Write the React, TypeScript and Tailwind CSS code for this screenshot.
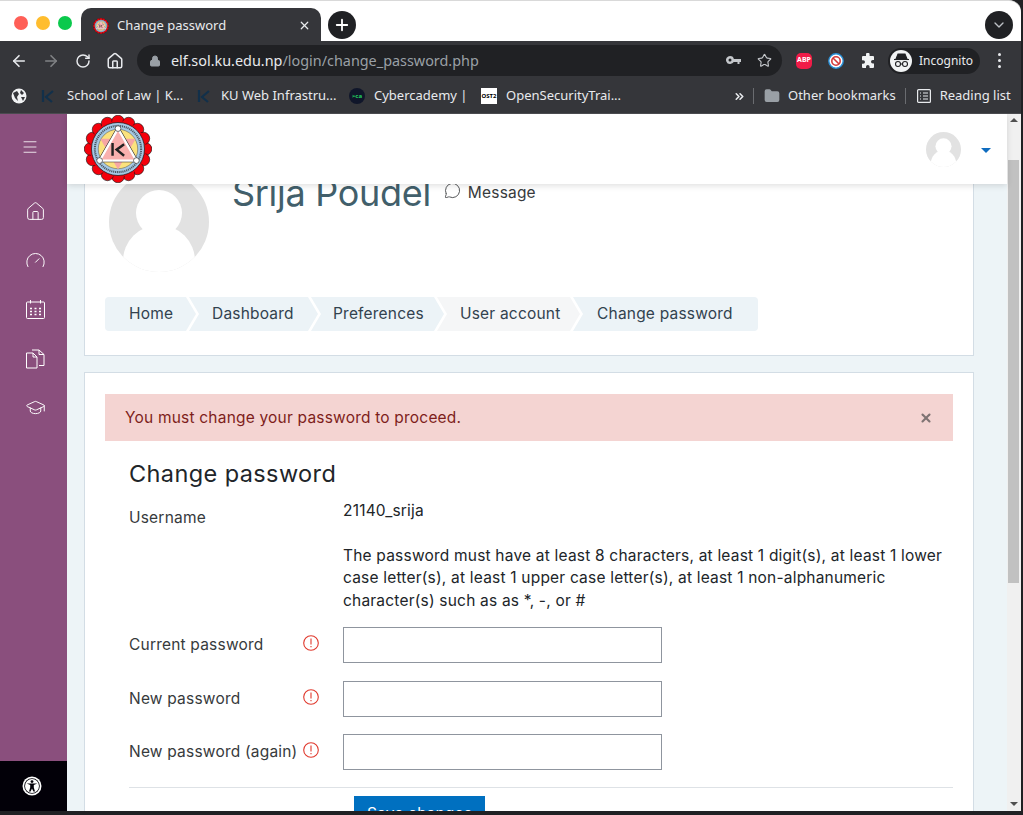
import {
  ArrowLeft,
  ArrowRight,
  ChevronDown,
  ChevronsRight,
  Folder,
  Gauge,
  GraduationCap,
  Home,
  Lock,
  Menu,
  MessageCircle,
  Plus,
  RotateCw,
  Star,
  X,
} from "lucide-react";

const poppins = "font-['Inter',sans-serif] text-[15.5px] tracking-[0.2px]";

function KuLogo({ size, id }: { size: number; id: string }) {
  const lobes = Array.from({ length: 16 }, (_, i) => {
    const a = (i / 16) * Math.PI * 2;
    return { key: `${id}-${i}`, x: 50 + 40.5 * Math.cos(a), y: 50 + 40.5 * Math.sin(a) };
  });
  return (
    <svg width={size} height={size} viewBox="0 0 100 100">
      {lobes.map((l) => (
        <circle key={l.key} cx={l.x} cy={l.y} r="9.2" fill="#f4000b" stroke="#111" strokeWidth="0.9" />
      ))}
      <circle cx="50" cy="50" r="41" fill="#f4000b" />
      <circle cx="50" cy="50" r="39" fill="#a5c8e4" stroke="#111" strokeWidth="1" />
      <circle cx="50" cy="50" r="34" fill="none" stroke="#4a5560" strokeWidth="3" strokeDasharray="1.6 1.2" />
      <circle cx="50" cy="50" r="29" fill="#fbe27d" stroke="#333" strokeWidth="0.6" />
      <path d="M24 35 H76 L50 80 Z" fill="#f6a6a4" />
      <path d="M50 20 L77 67 H23 Z" fill="#f9b0ae" stroke="#222" strokeWidth="5" strokeLinejoin="round" />
      <path d="M50 20 L77 67 H23 Z" fill="#f9b0ae" stroke="#fff" strokeWidth="3.4" strokeLinejoin="round" />
      <circle cx="50" cy="20" r="4.2" fill="#fff" stroke="#333" />
      <circle cx="77" cy="67" r="4.2" fill="#fff" stroke="#333" />
      <circle cx="23" cy="67" r="4.2" fill="#fff" stroke="#333" />
      <path d="M42 41 V60 M59 43 L48 51 L59 60" fill="none" stroke="#222" strokeWidth="3.6" />
    </svg>
  );
}

function KMark() {
  return (
    <svg width="16" height="16" viewBox="0 0 16 16">
      <path d="M3 2 V14 M13 3 L6 9 L12 14" fill="none" stroke="#12304a" strokeWidth="2.2" />
    </svg>
  );
}

function Avatar({ size }: { size: number }) {
  return (
    <svg width={size} height={size} viewBox="0 0 100 100">
      <defs>
        <clipPath id={`av-${size}`}>
          <circle cx="50" cy="50" r="50" />
        </clipPath>
      </defs>
      <g clipPath={`url(#av-${size})`}>
        <rect width="100" height="100" fill="#e2e2e2" />
        <circle cx="50" cy="41" r="23" fill="#fff" />
        <ellipse cx="50" cy="89" rx="36" ry="36" fill="#fff" />
      </g>
    </svg>
  );
}

function Crumb({ label, width, tone, pad, first, last }: { label: string; width: string; tone: string; pad: string; first?: boolean; last?: boolean }) {
  const shape = first
    ? "rounded-l-[4px] [clip-path:polygon(0_0,calc(100%-10px)_0,100%_50%,calc(100%-10px)_100%,0_100%)]"
    : last
      ? "rounded-r-[4px] [clip-path:polygon(0_0,100%_0,100%_100%,0_100%,10px_50%)]"
      : "[clip-path:polygon(0_0,calc(100%-10px)_0,100%_50%,calc(100%-10px)_100%,0_100%,10px_50%)]";
  return (
    <div className={`${width} ${tone} ${pad} ${shape} h-[34px] -mr-[7px] flex items-center text-[#32424f] ${poppins} whitespace-nowrap`}>
      {label}
    </div>
  );
}

function PasswordRow({ label }: { label: string }) {
  return (
    <div className="flex items-center h-[36px]">
      <div className={`w-[174px] text-[#373a3c] ${poppins} whitespace-nowrap`}>{label}</div>
      <div className="w-[40px] flex justify-start -mt-[4px]">
        <svg width="16" height="16" viewBox="0 0 16 16" fill="none" stroke="#e0392d" strokeWidth="1.1">
          <circle cx="8" cy="8" r="7.3" />
          <path d="M8 3.6 V9.6 M8 11 V12.2" />
        </svg>
      </div>
      <input type="password" className="w-[319px] h-[36px] border border-[#8f959e] bg-white outline-none" />
    </div>
  );
}

export default function App() {
  return (
    <div className="w-[1023px] h-[815px] overflow-hidden pr-[2px] bg-[#202124] font-['Noto_Sans',sans-serif]">
      {/* tab strip */}
      <div className="h-[41px] bg-white rounded-tr-[12px] border-t border-[#d9d9d9] flex items-end pl-[14px] pr-[8px]">
        <div className="flex gap-[8px] h-full items-center pt-[4px] w-[67px]">
          <span className="w-[14px] h-[14px] rounded-full bg-[#ff5f57]" />
          <span className="w-[14px] h-[14px] rounded-full bg-[#ffbd2e]" />
          <span className="w-[14px] h-[14px] rounded-full bg-[#0bc94c]" />
        </div>
        <div className="w-[240px] h-[33px] bg-[#35363a] rounded-t-[10px] flex items-center pl-[12px] pr-[10px] pt-[2px] text-[#e8eaed] text-[13px]">
          <KuLogo size={16} id="tab" />
          <span className="ml-[8px] flex-1">Change password</span>
          <X size={13} strokeWidth={2.2} />
        </div>
        <div className="ml-[7px] mb-[2px] w-[28px] h-[28px] rounded-full bg-[#202124] text-white flex items-center justify-center">
          <Plus size={18} strokeWidth={2.4} />
        </div>
        <div className="ml-auto mb-[2px] w-[28px] h-[28px] rounded-full bg-[#202124] text-[#bdc1c6] flex items-center justify-center">
          <ChevronDown size={16} />
        </div>
      </div>

      {/* toolbar */}
      <div className="h-[39px] bg-[#35363a] flex items-center pl-[10px] pr-[14px]">
        <ArrowLeft size={18} className="text-[#e8eaed]" strokeWidth={2.2} />
        <ArrowRight size={18} className="ml-[14px] text-[#808285]" strokeWidth={2.2} />
        <RotateCw size={16} className="ml-[15px] text-[#e8eaed]" strokeWidth={2.2} />
        <Home size={18} className="ml-[15px] text-[#e8eaed]" strokeWidth={2} />
        <div className="ml-[13px] w-[645px] h-[31px] rounded-full bg-[#202124] flex items-center pl-[12px] pr-[10px]">
          <Lock size={12} className="text-[#9aa0a6]" fill="#9aa0a6" />
          <span className="ml-[10px] text-[14.4px] text-[#e8eaed]">
            elf.sol.ku.edu.np<span className="text-[#9aa0a6]">/login/change_password.php</span>
          </span>
          <svg className="ml-auto" width="15" height="10" viewBox="0 0 15 10" fill="#c4c7cb">
            <path d="M4 0a4 4 0 1 1-3.7 5.5A4 4 0 0 1 4 0zm0 2.5a1.5 1.5 0 1 0 0 3 1.5 1.5 0 0 0 0-3zM7.5 3H15v3h-1.5v2h-2V6h-4z" />
          </svg>
          <Star size={15} className="ml-[16px] text-[#c4c7cb]" strokeWidth={1.8} />
        </div>
        <div className="ml-[14px] w-[16px] h-[16px] bg-[#f01c48] rounded-[5px] flex items-center justify-center text-[7px] font-bold text-white">ABP</div>
        <svg className="ml-[16px]" width="16" height="16" viewBox="0 0 16 16" fill="none">
          <circle cx="8" cy="8" r="7.2" fill="#fff" stroke="#2a8fd6" strokeWidth="1.4" />
          <circle cx="8" cy="8" r="4.2" stroke="#d33a3a" strokeWidth="1.6" />
          <path d="M5 5 L11 11" stroke="#d33a3a" strokeWidth="1.6" />
        </svg>
        <svg className="ml-[16px]" width="16" height="16" viewBox="0 0 16 16" fill="#f1f3f4">
          <path d="M6 1.5a1.8 1.8 0 0 1 3.6 0V3H13a1 1 0 0 1 1 1v3h-1.2a1.8 1.8 0 0 0 0 3.6H14V14a1 1 0 0 1-1 1H9.6v-1.2a1.8 1.8 0 0 0-3.6 0V15H3a1 1 0 0 1-1-1v-3.2h1.2a1.8 1.8 0 0 0 0-3.6H2V4a1 1 0 0 1 1-1h3z" />
        </svg>
        <div className="ml-[12px] w-[92px] h-[26px] rounded-full bg-[#202124] flex items-center pl-[1px] text-[12px] text-[#e8eaed]">
          <span className="w-[22px] h-[22px] rounded-full bg-[#f1f3f4] flex items-center justify-center ml-[1px]">
            <svg width="17" height="15" viewBox="0 0 17 15" fill="none" stroke="#202124" strokeWidth="1.1">
              <path d="M3 6 L5 1 H12 L14 6 Z" fill="#202124" />
              <path d="M1 6.5 H16" />
              <circle cx="5" cy="11" r="2.5" />
              <circle cx="12" cy="11" r="2.5" />
              <path d="M7.5 11 H9.5" />
            </svg>
          </span>
          <span className="ml-[7px]">Incognito</span>
        </div>
        <div className="ml-[18px] flex flex-col gap-[3px]">
          <span className="w-[3px] h-[3px] rounded-full bg-[#e8eaed]" />
          <span className="w-[3px] h-[3px] rounded-full bg-[#e8eaed]" />
          <span className="w-[3px] h-[3px] rounded-full bg-[#e8eaed]" />
        </div>
      </div>

      {/* bookmarks */}
      <div className="h-[34px] bg-[#35363a] border-b border-[#4a4b4f] flex items-center pl-[11px] pb-[1px] text-[13px] text-[#e8eaed] whitespace-nowrap">
        <svg width="16" height="16" viewBox="0 0 16 16">
          <circle cx="8" cy="8" r="7.5" fill="#f1f3f4" />
          <path d="M2 5 L6 3 L8 6 L6 9 L7 13 L4 10 Z M10 2 L13 5 L11 7 L9 5 Z M10 9 L14 9 L12 13 Z" fill="#35363a" />
        </svg>
        <span className="ml-[13px]"><KMark /></span>
        <span className="ml-[11px] w-[117px]">School of Law | K...</span>
        <span className="ml-[12px]"><KMark /></span>
        <span className="ml-[9px] w-[113px]">KU Web Infrastru...</span>
        <span className="ml-[15px] w-[16px] h-[16px] rounded-full bg-[#10162a] text-[#22d35f] text-[6px] font-bold flex items-center justify-center">&gt;ca</span>
        <span className="ml-[9px] w-[90px]">Cybercademy |</span>
        <span className="ml-[17px] w-[16px] h-[16px] bg-white text-black text-[6px] leading-[7px] font-bold flex items-center justify-center text-center">OST2</span>
        <span className="ml-[9px] w-[113px]">OpenSecurityTrai...</span>
        <ChevronsRight size={13} strokeWidth={3} className="ml-[114px]" />
        <span className="ml-[7px] w-px h-[16px] bg-[#6a6c70]" />
        <Folder size={16} className="ml-[10px] text-[#9aa0a6]" fill="#9aa0a6" />
        <span className="ml-[8px]">Other bookmarks</span>
        <span className="ml-[9px] w-px h-[16px] bg-[#6a6c70]" />
        <svg className="ml-[11px]" width="14" height="14" viewBox="0 0 14 14" fill="none" stroke="#e8eaed" strokeWidth="1.2">
          <rect x="0.6" y="0.6" width="12.8" height="12.8" rx="1" />
          <path d="M3 4 H4 M6 4 H11 M3 7 H4 M6 7 H11 M3 10 H4 M6 10 H11" />
        </svg>
        <span className="ml-[9px]">Reading list</span>
      </div>

      {/* page */}
      <div className="h-[697px] flex bg-[#edf4f7] overflow-hidden">
        <aside className="w-[67px] bg-[#8a4f7d] flex flex-col items-center text-white shrink-0">
          <div className="h-[70px] w-full flex items-center justify-center">
            <Menu size={18} strokeWidth={1.1} className="-ml-[8px] -mt-[4px]" />
          </div>
          <div className="flex flex-col items-center gap-[28px] pt-[17px] ml-[3px]">
            <Home size={21} strokeWidth={1.1} />
            <Gauge size={21} strokeWidth={1.1} />
            <svg width="21" height="21" viewBox="0 0 21 21" fill="none" stroke="currentColor" strokeWidth="1">
              <rect x="1.5" y="3" width="18" height="16.5" rx="1" />
              <path d="M5.5 1 V4.5 M15.5 1 V4.5" />
              <path d="M5 9.5h2M9.5 9.5h2M14 9.5h2M5 12.5h2M9.5 12.5h2M14 12.5h2M5 15.5h2M9.5 15.5h2M14 15.5h2" strokeWidth="1.6" />
            </svg>
            <svg width="21" height="21" viewBox="0 0 21 21" fill="none" stroke="currentColor" strokeWidth="1">
              <path d="M1.5 5 H8 L12 9 V20 H1.5 Z" />
              <path d="M7 2 H14 L19 6.5 V17.5 H14" />
              <path d="M14 2 V6.5 H19 M8 5 V9 H12" />
            </svg>
            <GraduationCap size={21} strokeWidth={1.1} />
          </div>
          <div className="mt-auto h-[50px] w-full bg-[#020008] flex items-center justify-center">
            <svg className="-ml-[3px]" width="20" height="20" viewBox="0 0 20 20">
              <circle cx="10" cy="10" r="9.5" fill="#fff" />
              <circle cx="10" cy="10" r="7.8" fill="#020008" />
              <circle cx="10" cy="10" r="7" fill="#fff" />
              <circle cx="10" cy="5.6" r="1.4" fill="#020008" />
              <path d="M4.8 7.6 H15.2 L11.8 9 V11.5 L13 15.5 H11.4 L10 12.4 L8.6 15.5 H7 L8.2 11.5 V9 Z" fill="#020008" />
            </svg>
          </div>
        </aside>

        <div className="w-[940px] flex flex-col shrink-0">
          <header className="h-[70px] bg-white shadow-[0_2px_6px_rgba(0,0,0,0.12)] relative z-10 flex items-center pl-[17px] shrink-0">
            <KuLogo size={68} id="head" />
            <div className="ml-auto flex items-center pr-[16px]">
              <Avatar size={35} />
              <span className="ml-[20px] mt-[2px] w-0 h-0 border-x-[5px] border-x-transparent border-t-[5px] border-t-[#0f6cbf]" />
            </div>
          </header>

          <main className="flex-1 overflow-hidden pl-[17px] pr-[33px] flex flex-col gap-[16px]">
            <section className="shrink-0 -mt-[40px] h-[212px] bg-white border border-[#d3dde5] pl-[24px] pt-[27px]">
              <div className="flex">
                <div className="w-[100px] h-[100px] shrink-0">
                  <Avatar size={100} />
                </div>
                <div className="ml-[23px] -mt-[3px] h-[48px] text-[36px] leading-[48px] text-[#425f6b] font-['Inter',sans-serif] tracking-[-0.3px] whitespace-nowrap">
                  Srija Poudel
                </div>
                <div className={`ml-[13px] mt-[6px] h-[30px] flex items-center gap-[7px] text-[#373a3c] ${poppins}`}>
                  <MessageCircle size={17} strokeWidth={1.2} className="-mt-[5px]" />
                  Message
                </div>
              </div>
              <div className="flex mt-[25px] -ml-[4px]">
                <Crumb label="Home" width="w-[91px]" pad="pl-[24px]" tone="bg-[#ecf3f7]" first />
                <Crumb label="Dashboard" width="w-[129px]" pad="pl-[23px]" tone="bg-[#ecf3f7]" />
                <Crumb label="Preferences" width="w-[133px]" pad="pl-[22px]" tone="bg-[#ecf3f7]" />
                <Crumb label="User account" width="w-[143px]" pad="pl-[23px]" tone="bg-[#f5f6f7]" />
                <Crumb label="Change password" width="w-[185px]" pad="pl-[24px]" tone="bg-[#ecf3f7]" last />
              </div>
            </section>

            <section className="shrink-0 bg-white border border-[#d3dde5] px-[20px] pt-[21px] h-[500px]">
              <div className={`h-[47px] bg-[#f4d4d2] text-[#7e1e1b] flex items-center pl-[20px] pr-[20px] ${poppins}`}>
                <span className="flex-1">You must change your password to proceed.</span>
                <X size={14} strokeWidth={3.6} className="text-[#7f7373]" />
              </div>
              <div className="pl-[24px]">
                <h2 className="mt-[18px] text-[23.5px] leading-[30px] text-[#212529] font-['Inter',sans-serif] tracking-[0.4px]">Change password</h2>
                <div className="flex mt-[11px]">
                  <div className={`w-[214px] mt-[6px] text-[#373a3c] ${poppins}`}>Username</div>
                  <div className={`text-[#212529] leading-[22.5px] ${poppins}`}>
                    <div>21140_srija</div>
                    <p className="mt-[22px] w-[610px]">
                      The password must have at least 8 characters, at least 1 digit(s), at least 1 lower case letter(s), at least 1 upper case letter(s), at least 1 non-alphanumeric character(s) such as as *, -, or #
                    </p>
                  </div>
                </div>
                <div className="mt-[15px] flex flex-col gap-[17.5px]">
                  <PasswordRow label="Current password" />
                  <PasswordRow label="New password" />
                  <PasswordRow label="New password (again)" />
                </div>
                <div className="mt-[17px] border-t border-[#dee2e6] pl-[225px] pt-[8px]">
                  <button className={`w-[131px] h-[36px] bg-[#0070c0] text-white ${poppins}`}>Save changes</button>
                </div>
              </div>
            </section>
          </main>
        </div>

        <div className="w-[14px] bg-[#f0f0f0] flex flex-col items-center pt-[4px] pb-[5px] shrink-0 pr-[1px]">
          <span className="w-0 h-0 border-x-[4px] border-x-transparent border-b-[4px] border-b-[#505050]" />
          <span className="mt-[38px] w-[11px] h-[423px] bg-[#c1c1c1]" />
          <span className="mt-auto w-0 h-0 border-x-[4px] border-x-transparent border-t-[4px] border-t-[#505050]" />
        </div>
      </div>
    </div>
  );
}
